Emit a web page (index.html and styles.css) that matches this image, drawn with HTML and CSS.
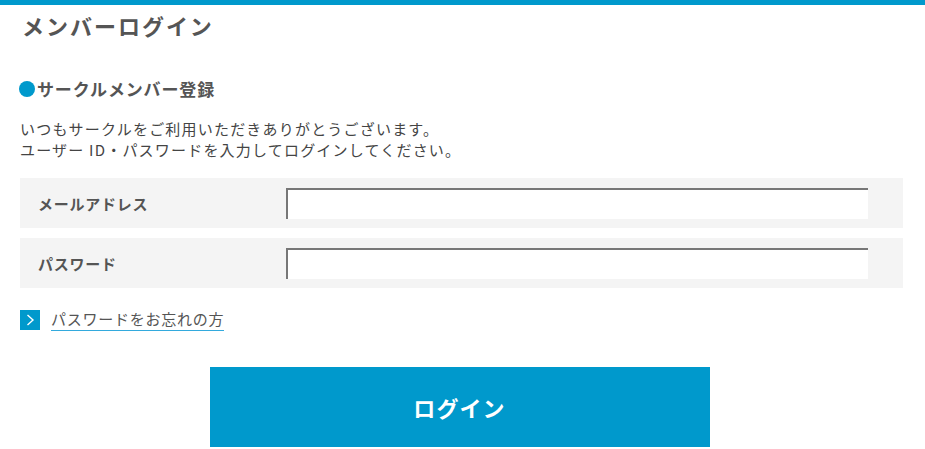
FILE: index.html
```html
<!DOCTYPE html>
<html lang="ja">
<head>
<meta charset="utf-8">
<title>メンバーログイン</title>
<link rel="stylesheet" href="styles.css">
</head>
<body>
<div class="topbar"></div>
<main class="page">
  <h1 class="title">メンバーログイン</h1>
  <h2 class="section-title"><span class="dot"></span>サークルメンバー登録</h2>
  <p class="lead">いつもサークルをご利用いただきありがとうございます。<br>ユーザー ID・パスワードを入力してログインしてください。</p>
  <form class="form">
    <div class="row">
      <label class="label" for="email">メールアドレス</label>
      <input class="field" id="email" type="text">
    </div>
    <div class="row">
      <label class="label" for="pass">パスワード</label>
      <input class="field" id="pass" type="password">
    </div>
    <a class="forgot" href="#">
      <span class="forgot-icon"><svg width="20" height="20" viewBox="0 0 20 20"><path d="M7.5 5 L13 10 L7.5 15" fill="none" stroke="#fff" stroke-width="1.4"/></svg></span>
      <span class="forgot-text">パスワードをお忘れの方</span>
    </a>
    <div class="actions">
      <button class="submit" type="button">ログイン</button>
    </div>
  </form>
</main>
</body>
</html>
```
FILE: styles.css
```css
html, body {
  margin: 0;
  padding: 0;
  background: #fff;
}
body {
  font-family: "Noto Sans CJK JP", "Noto Sans", sans-serif;
  color: #555;
}
.topbar {
  height: 5px;
  background: #0099cc;
}
.page {
  padding: 0 22px 0 20px;
}
.title {
  margin: 0;
  padding: 5px 0 0 2px;
  font-size: 22px;
  line-height: 30px;
  font-weight: 700;
  letter-spacing: 0.09em;
  color: #555;
}
.section-title {
  display: flex;
  align-items: center;
  margin: 37px 0 0 0;
  font-size: 17px;
  line-height: 24px;
  font-weight: 700;
  letter-spacing: 0.05em;
  color: #555;
}
.dot {
  width: 16px;
  height: 16px;
  border-radius: 50%;
  background: #0099cc;
  margin: 0 2px 0 -1px;
}
.lead {
  margin: 17px 0 0 0;
  font-size: 15px;
  line-height: 21px;
  letter-spacing: 0.08em;
  color: #444;
}
.form {
  margin-top: 18px;
}
.row {
  display: flex;
  align-items: center;
  height: 50px;
  background: #f4f4f4;
  margin-bottom: 10px;
}
.label {
  width: 248px;
  padding-left: 18px;
  font-size: 15px;
  font-weight: 700;
  letter-spacing: 0.05em;
  color: #555;
}
.field {
  box-sizing: border-box;
  width: 582px;
  height: 31px;
  margin: 0;
  padding: 0 6px;
  border: 0;
  border-top: 2px solid #777;
  border-left: 2px solid #777;
  background: #fff;
  outline: none;
}
.forgot {
  display: inline-flex;
  align-items: center;
  margin-top: 11px;
  text-decoration: none;
  color: #555;
}
.forgot-icon {
  display: flex;
  width: 20px;
  height: 20px;
  background: #0099cc;
}
.forgot-text {
  margin-left: 11px;
  font-size: 15px;
  line-height: 20px;
  letter-spacing: 0.05em;
  border-bottom: 1px solid #33aadd;
  padding-bottom: 1px;
}
.actions {
  display: flex;
  justify-content: center;
  margin-top: 32px;
}
.submit {
  width: 500px;
  height: 80px;
  margin-left: -4px;
  border: 0;
  background: #0099cc;
  color: #fff;
  font-family: "Noto Sans CJK JP", "Noto Sans", sans-serif;
  font-size: 22px;
  font-weight: 700;
  letter-spacing: 0.05em;
}
```
